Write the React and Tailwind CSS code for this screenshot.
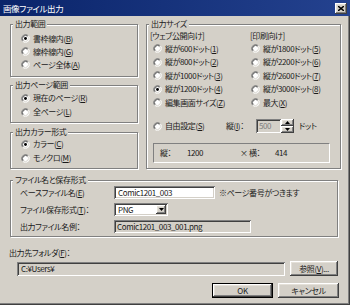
import React from "react";

const RAISED =
  "shadow-[inset_-1px_-1px_0_#404040,inset_1px_1px_0_#ffffff,inset_-2px_-2px_0_#808080,inset_2px_2px_0_#e4e0d8]";
const SUNKEN =
  "shadow-[inset_1px_1px_0_#808080,inset_-1px_-1px_0_#ffffff,inset_2px_2px_0_#404040,inset_-2px_-2px_0_#d4d0c8]";

function Radio({ checked }) {
  return (
    <svg width="9" height="9" viewBox="0 0 10 10" className="shrink-0">
      <circle cx="5" cy="5" r="4" fill="#fff" />
      <path d="M8.18 1.82 A4.5 4.5 0 0 0 1.82 8.18" stroke="#808080" strokeWidth="1" fill="none" />
      <path d="M8.18 1.82 A4.5 4.5 0 0 1 1.82 8.18" stroke="#fff" strokeWidth="1" fill="none" />
      <path d="M7.47 2.53 A3.5 3.5 0 0 0 2.53 7.47" stroke="#404040" strokeWidth="1" fill="none" />
      <path d="M7.47 2.53 A3.5 3.5 0 0 1 2.53 7.47" stroke="#d4d0c8" strokeWidth="1" fill="none" />
      {checked && <circle cx="5" cy="5" r="1.6" fill="#000" />}
    </svg>
  );
}

function RadioRow({ checked, h, children }) {
  return (
    <div className={`flex items-center ${h}`}>
      <Radio checked={checked} />
      <span className="ml-[3px] whitespace-nowrap">{children}</span>
    </div>
  );
}

function Group({ label, className = "", children }) {
  return (
    <fieldset
      className={`border border-[#808080] shadow-[inset_1px_1px_0_#ffffff,1px_1px_0_#ffffff] min-w-0 ${className}`}
    >
      <legend className="ml-[2px] px-[2px] bg-[#d4d0c8] leading-[10px] whitespace-nowrap">{label}</legend>
      {children}
    </fieldset>
  );
}

function Tri({ down = true }) {
  return (
    <svg width="5" height="3" viewBox="0 0 5 3">
      <path d={down ? "M0 0 H5 L2.5 3 Z" : "M0 3 H5 L2.5 0 Z"} fill="#000" />
    </svg>
  );
}

export default function App() {
  return (
    <div className="w-[350px] h-[305px] bg-[#d4d0c8] overflow-hidden flex flex-col text-[#1a1a1a] text-[8px] leading-[10px] tracking-[-0.4px] font-['Noto_Sans_CJK_JP','Liberation_Sans',sans-serif] [font-feature-settings:'palt'] shadow-[inset_-1px_-1px_0_#404040,inset_-2px_-2px_0_#808080]">
      {/* Title bar */}
      <div className="h-[16px] shrink-0 flex items-center justify-between pl-[3px] pr-[3px] bg-gradient-to-r from-[#0a246a] to-[#24428f]">
        <span className="text-white text-[8.5px] leading-[10px]">画像ファイル出力</span>
        <div className={`w-[12px] h-[11px] bg-[#d4d0c8] flex items-center justify-center ${RAISED}`}>
          <svg width="6" height="5" viewBox="0 0 6 5">
            <path d="M0 0 L6 5 M6 0 L0 5" stroke="#000" strokeWidth="1.4" />
          </svg>
        </div>
      </div>

      <div className="flex flex-col pl-[10px] pr-[9px] pt-[3px]">
        {/* Top row */}
        <div className="flex gap-[8px]">
          <div className="w-[128px] flex flex-col shrink-0">
            <Group label="出力範囲">
              <div className="pl-[10px] pt-[3px] pb-[5px]">
                <RadioRow checked h="h-[13px]">書枠線内(<u>B</u>)</RadioRow>
                <RadioRow h="h-[13px]">線枠線内(<u>G</u>)</RadioRow>
                <RadioRow h="h-[13px]">ページ全体(<u>A</u>)</RadioRow>
              </div>
            </Group>
            <Group label="出力ページ範囲" className="mt-[3px]">
              <div className="pl-[10px] pt-[1px] pb-[3px]">
                <RadioRow checked h="h-[14px]">現在のページ(<u>R</u>)</RadioRow>
                <RadioRow h="h-[14px]">全ページ(<u>L</u>)</RadioRow>
              </div>
            </Group>
            <Group label="出力カラー形式" className="mt-[4px]">
              <div className="pl-[10px] pb-[3px]">
                <RadioRow checked h="h-[14px]">カラー(<u>C</u>)</RadioRow>
                <RadioRow h="h-[14px]">モノクロ(<u>M</u>)</RadioRow>
              </div>
            </Group>
          </div>

          <Group label="出力サイズ" className="flex-1">
            <div className="pl-[3px]">
              <div className="grid grid-cols-[100px_1fr]">
                <div>
                  <div className="h-[13px] flex items-center">[ウェブ公開向け]</div>
                  <div className="pl-[3px]">
                    <RadioRow h="h-[13.5px]">縦が600ドット(<u>1</u>)</RadioRow>
                    <RadioRow h="h-[13.5px]">縦が800ドット(<u>2</u>)</RadioRow>
                    <RadioRow h="h-[13.5px]">縦が1000ドット(<u>3</u>)</RadioRow>
                    <RadioRow checked h="h-[13.5px]">縦が1200ドット(<u>4</u>)</RadioRow>
                    <RadioRow h="h-[13.5px]">編集画面サイズ(<u>Z</u>)</RadioRow>
                  </div>
                </div>
                <div>
                  <div className="h-[13px] flex items-center">[印刷向け]</div>
                  <div className="pl-[1px]">
                    <RadioRow h="h-[13.5px]">縦が1800ドット(<u>5</u>)</RadioRow>
                    <RadioRow h="h-[13.5px]">縦が2200ドット(<u>6</u>)</RadioRow>
                    <RadioRow h="h-[13.5px]">縦が2600ドット(<u>7</u>)</RadioRow>
                    <RadioRow h="h-[13.5px]">縦が3000ドット(<u>8</u>)</RadioRow>
                    <RadioRow h="h-[13.5px]">最大(<u>X</u>)</RadioRow>
                  </div>
                </div>
              </div>

              <div className="mt-[9.5px] h-[14px] flex items-center pl-[3px]">
                <div className="w-[73px] flex items-center">
                  <Radio />
                  <span className="ml-[3px] whitespace-nowrap">自由設定(<u>S</u>)</span>
                </div>
                <span className="w-[30px] whitespace-nowrap">縦(<u>I</u>)：</span>
                <div className={`w-[25px] h-[14px] bg-[#d4d0c8] flex items-center pl-[3px] text-[#808080] ${SUNKEN}`}>
                  500
                </div>
                <div className="w-[13px] h-[14px] flex flex-col">
                  <div className={`h-[7px] bg-[#d4d0c8] flex items-center justify-center ${RAISED}`}>
                    <Tri down={false} />
                  </div>
                  <div className={`h-[7px] bg-[#d4d0c8] flex items-center justify-center ${RAISED}`}>
                    <Tri />
                  </div>
                </div>
                <span className="ml-[5px]">ドット</span>
              </div>

              <div className="mt-[10px] ml-[3px] w-[177px] h-[20px] border border-t-[#808080] border-l-[#808080] border-b-white border-r-white flex items-center pl-[6px]">
                <span className="w-[27px]">縦：</span>
                <span className="w-[53px]">1200</span>
                <span className="w-[35px]">× 横：</span>
                <span>414</span>
              </div>
            </div>
          </Group>
        </div>

        {/* File name group */}
        <Group label="ファイル名と保存形式" className="mt-[6px] mr-[3px]">
          <div className="pl-[9px] pt-[1px] pb-[3px] flex flex-col gap-[4px]">
            <div className="h-[13px] flex items-center">
              <span className="w-[94px] whitespace-nowrap">ベースファイル名(<u>E</u>)</span>
              <div className={`w-[101px] h-[13px] bg-white flex items-center pl-[4px] ${SUNKEN}`}>Comic1201_003</div>
              <span className="ml-[4px] whitespace-nowrap">※ページ番号がつきます</span>
            </div>
            <div className="h-[13px] flex items-center">
              <span className="w-[94px] whitespace-nowrap">ファイル保存形式(<u>T</u>)：</span>
              <div className={`w-[54px] h-[13px] bg-white flex items-center justify-between pl-[4px] pr-[2px] ${SUNKEN}`}>
                <span>PNG</span>
                <div className={`w-[10px] h-[9px] bg-[#d4d0c8] flex items-center justify-center ${RAISED}`}>
                  <Tri />
                </div>
              </div>
            </div>
            <div className="h-[13px] flex items-center">
              <span className="w-[94px] whitespace-nowrap">出力ファイル名例：</span>
              <div className={`w-[137px] h-[13px] bg-[#d4d0c8] flex items-center pl-[3px] ${SUNKEN}`}>Comic1201_003_001.png</div>
            </div>
          </div>
        </Group>

        {/* Output folder */}
        <div className="mt-[11px] -ml-[1px] h-[10px] flex items-center whitespace-nowrap">出力先フォルダ(<u>F</u>)：</div>
        <div className="mt-[3px] flex items-center">
          <div className={`ml-[7px] w-[268px] h-[14px] bg-[#d4d0c8] flex items-center pl-[4px] ${SUNKEN}`}>C:¥Users¥</div>
          <div className={`ml-[5px] w-[48px] h-[15px] bg-[#d4d0c8] flex items-center justify-center whitespace-nowrap ${RAISED}`}>
            参照(<u>V</u>)...
          </div>
        </div>

        {/* Buttons */}
        <div className="mt-[7px] flex justify-end gap-[5px] pr-[2px]">
          <div className="w-[61px] h-[15px] border border-black">
            <div className={`w-full h-full bg-[#d4d0c8] flex items-center justify-center ${RAISED}`}>OK</div>
          </div>
          <div className={`w-[61px] h-[15px] bg-[#d4d0c8] flex items-center justify-center ${RAISED}`}>キャンセル</div>
        </div>
      </div>
    </div>
  );
}
